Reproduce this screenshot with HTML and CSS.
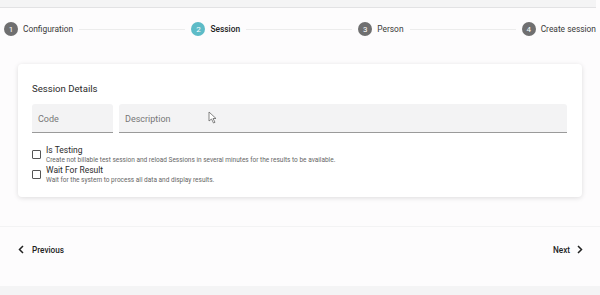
FILE: index.html
```html
<!DOCTYPE html>
<html lang="en">
<head>
    <meta charset="UTF-8">
    <title>Create Session</title>
    <link rel="stylesheet" href="styles.css">
</head>
<body>
    <div class="topbar"></div>

    <div class="stepper">
        <div class="step done"><span class="num">1</span><span class="label">Configuration</span></div>
        <div class="line"></div>
        <div class="step active"><span class="num">2</span><span class="label">Session</span></div>
        <div class="line"></div>
        <div class="step"><span class="num">3</span><span class="label">Person</span></div>
        <div class="line"></div>
        <div class="step"><span class="num">4</span><span class="label">Create session</span></div>
    </div>

    <div class="card">
        <h3>Session Details</h3>
        <div class="fields">
            <div class="field code"><span>Code</span></div>
            <div class="field desc">
                <span>Description</span>
                <svg class="cursor" width="9" height="13" viewBox="0 0 9 13">
                    <path d="M1 1 L1 10 L3.5 8 L5.5 12 L7 11.3 L5 7.5 L8 7.5 Z" fill="#fff" stroke="#666" stroke-width="0.8" stroke-linejoin="round"/>
                </svg>
            </div>
        </div>

        <div class="check">
            <span class="box"></span>
            <div>
                <div class="check-title">Is Testing</div>
                <div class="check-hint">Create not billable test session and reload Sessions in several minutes for the results to be available.</div>
            </div>
        </div>
        <div class="check">
            <span class="box"></span>
            <div>
                <div class="check-title">Wait For Result</div>
                <div class="check-hint">Wait for the system to process all data and display results.</div>
            </div>
        </div>
    </div>

    <div class="nav">
        <a class="btn prev">
            <svg width="6" height="9" viewBox="0 0 6 9"><path d="M5 1 L1.5 4.5 L5 8" fill="none" stroke="#222" stroke-width="1.5"/></svg>
            Previous
        </a>
        <a class="btn next">
            Next
            <svg width="6" height="9" viewBox="0 0 6 9"><path d="M1 1 L4.5 4.5 L1 8" fill="none" stroke="#222" stroke-width="1.5"/></svg>
        </a>
    </div>

    <div class="bottombar"></div>
</body>
</html>
```

FILE: styles.css
```css
body {
    margin: 0;
    font-family: Roboto, "Liberation Sans", sans-serif;
    background: #fdfcfd;
    color: #333;
    width: 600px;
    height: 295px;
    overflow: hidden;
}
.topbar {
    height: 7px;
    background: #f4f4f5;
    border-bottom: 1px solid #e2e2e4;
    margin-right: 4px;
}
.stepper {
    display: flex;
    align-items: center;
    height: 14px;
    padding: 14px 4px 0 4px;
}
.step {
    display: flex;
    align-items: center;
    gap: 5px;
}
.num {
    width: 14px;
    height: 14px;
    border-radius: 50%;
    background: #6f6f70;
    color: #fff;
    font-size: 8px;
    display: flex;
    align-items: center;
    justify-content: center;
}
.active .num {
    background: #5dbbc7;
}
.label {
    font-size: 8.4px;
    color: #3a3a3a;
}
.active .label {
    font-weight: 500;
    color: #222;
}
.line {
    flex: 1;
    height: 1px;
    background: #ececec;
    margin: 0 6px;
}
.card {
    background: #fff;
    margin: 28px 18px 0 18px;
    height: 133px;
    box-sizing: border-box;
    padding: 18px 15px 0 14px;
    border-radius: 4px;
    box-shadow: 0 1px 5px rgba(0,0,0,0.13);
}
.card h3 {
    margin: 0;
    font-size: 9.6px;
    font-weight: 400;
    color: #2b2b2b;
    line-height: 14px;
}
.fields {
    display: flex;
    gap: 6px;
    margin-top: 8px;
}
.field {
    height: 29px;
    background: #f3f3f4;
    border-bottom: 1px solid #9a9a9a;
    border-radius: 3px 3px 0 0;
    font-size: 9px;
    color: #777;
    display: flex;
    align-items: center;
    padding-left: 6px;
    padding-top: 1px;
    box-sizing: border-box;
    position: relative;
}
.code {
    width: 81px;
}
.desc {
    flex: 1;
}
.cursor {
    position: absolute;
    left: 89px;
    top: 7px;
}
.check {
    display: flex;
    align-items: flex-start;
    gap: 5px;
}
.fields + .check {
    margin-top: 12px;
}
.box {
    width: 7px;
    height: 7px;
    border: 1.5px solid #555;
    border-radius: 1px;
    margin-top: 5px;
    flex-shrink: 0;
}
.check-title {
    font-size: 8.5px;
    color: #2b2b2b;
    line-height: 11px;
}
.check-hint {
    font-size: 6.5px;
    color: #666;
    line-height: 9px;
}
.nav {
    display: flex;
    justify-content: space-between;
    align-items: center;
    margin-top: 29px;
    border-top: 1px solid #f3f3f4;
    height: 60px;
    box-sizing: border-box;
    padding: 0 17px 14px 18px;
}
.btn {
    display: flex;
    align-items: center;
    gap: 8px;
    font-size: 8.2px;
    font-weight: 500;
    color: #222;
}
.next {
    gap: 7px;
}
.bottombar {
    height: 10px;
    background: #f4f4f5;
}
```
